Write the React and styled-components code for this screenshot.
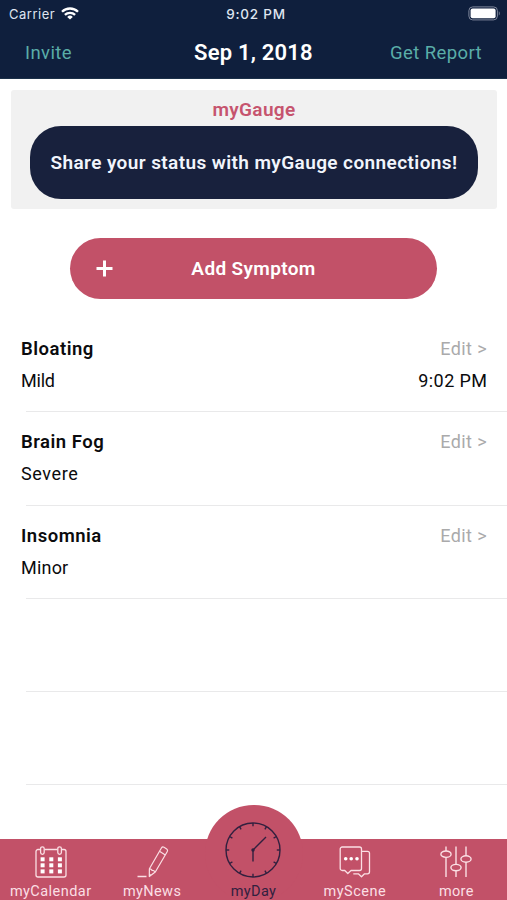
import React from "react"
import styled, { createGlobalStyle } from "styled-components"

const navy = "#0f1f3d"
const pink = "#c25168"
const teal = "#5aada8"

const GlobalStyle = createGlobalStyle`
  * {
    box-sizing: border-box;
  }

  body {
    margin: 0;
    background: #fff;
    font-family: Roboto, "Open Sans", sans-serif;
    color: #0b0b0d;
  }

  button {
    border: 0;
    padding: 0;
    background: none;
    font: inherit;
    color: inherit;
    cursor: pointer;
  }
`

const Screen = styled.div`
  display: flex;
  flex-direction: column;
  width: 507px;
  height: 900px;
  overflow: hidden;
  background: #fff;
`

const Header = styled.header`
  flex: none;
  height: 79px;
  background: ${navy};
  border-bottom: 1px solid #1b3049;
`

const StatusBar = styled.div`
  display: grid;
  grid-template-columns: 1fr auto 1fr;
  align-items: center;
  height: 27px;
  padding: 0 6px 0 9px;
  font-family: Inter, sans-serif;
  font-size: 13px;
  color: #dfe5f0;
`

const Carrier = styled.div`
  display: flex;
  align-items: center;
  gap: 6px;
  letter-spacing: 0.5px;
`

const Clock = styled.div`
  font-size: 13.5px;
  font-weight: 500;
  letter-spacing: 0.75px;
  margin-left: 2px;
`

const Battery = styled.svg`
  justify-self: end;
`

const NavBar = styled.nav`
  display: grid;
  grid-template-columns: 1fr auto 1fr;
  align-items: center;
  height: 52px;
  padding: 0 25px 0 25px;
`

const NavLink = styled.button`
  justify-self: ${p => (p.$end ? "end" : "start")};
  font-size: 18.5px;
  line-height: 22px;
  letter-spacing: 0.4px;
  color: ${teal};
`

const Title = styled.h1`
  margin: 0;
  font-size: 22px;
  line-height: 26px;
  font-weight: 600;
  letter-spacing: 0.2px;
  color: #fff;
`

const Gauge = styled.section`
  flex: none;
  display: flex;
  flex-direction: column;
  align-items: center;
  height: 119px;
  margin: 11px 10px 0 11px;
  padding-top: 9px;
  border-radius: 3px;
  background: #f1f1f1;
`

const GaugeName = styled.h2`
  margin: 0 0 6px;
  font-size: 19px;
  line-height: 21px;
  font-weight: 600;
  letter-spacing: 0.35px;
  color: #c6546e;
`

const ShareButton = styled.button`
  width: 448px;
  height: 73px;
  border-radius: 31px;
  background: #18213d;
  color: #f1f5fc;
  font-size: 19px;
  font-weight: 600;
  letter-spacing: 0.4px;
  white-space: nowrap;
`

const AddButton = styled.button`
  flex: none;
  display: grid;
  grid-template-columns: 68px 1fr 68px;
  align-items: center;
  width: 367px;
  height: 61px;
  margin: 29px 0 0 70px;
  border-radius: 31px;
  background: ${pink};
  color: #fff;
  font-size: 19px;
  font-weight: 600;
  letter-spacing: 0.35px;

  svg {
    justify-self: center;
  }
`

const List = styled.ul`
  flex: none;
  margin: 19px 0 0;
  padding: 0;
  list-style: none;
`

const Row = styled.li`
  display: flex;
  flex-direction: column;
  height: 93.3px;
  padding: 20px 20px 0 21px;
  font-size: 18px;
  line-height: 22px;

  &:after {
    content: "";
    flex: none;
    height: 1px;
    margin: auto -20px 0 5px;
    background: #e9e9ea;
    transform: translateY(1px);
  }
`

const Line = styled.div`
  display: flex;
  justify-content: space-between;
  height: 22px;
  margin-bottom: 10px;
`

const Symptom = styled.span`
  font-size: 18.5px;
  font-weight: 600;
  letter-spacing: 0.5px;
`

const Level = styled.span`
  letter-spacing: ${p => p.$spacing};
`

const Time = styled.span`
  letter-spacing: 0.4px;
  margin-right: -0.4px;
`

const Edit = styled.button`
  color: #aaaaab;
  letter-spacing: 0.4px;
`

const TabBar = styled.footer`
  position: relative;
  flex: none;
  display: grid;
  grid-template-columns: repeat(5, 1fr);
  height: 61px;
  margin-top: auto;
  background: ${pink};

  /* round bump behind the middle tab */
  &:before {
    content: "";
    position: absolute;
    left: 205px;
    top: -34.5px;
    width: 97.5px;
    height: 97.5px;
    border-radius: 50%;
    background: ${pink};
  }
`

const Tab = styled.button`
  position: relative;
  display: flex;
  flex-direction: column;
  align-items: center;
  justify-content: flex-end;
  height: 61px;
  color: ${p => (p.$active ? "#31203f" : "#fbdfe4")};
  font-size: 14.5px;
  line-height: 16px;
  letter-spacing: ${p => p.$spacing};
  white-space: nowrap;

  svg {
    flex: none;
    margin-bottom: 6px;
    overflow: visible;
  }
`

const WifiIcon = () => (
  <svg width="18" height="13" viewBox="0 0 18 13" fill="none" stroke="#fff" strokeWidth="2.3">
    <path d="M1 4.8a11.3 11.3 0 0 1 16 0" />
    <path d="M3.9 7.9a7.2 7.2 0 0 1 10.2 0" />
    <path d="M9 12.6 6.2 9.9a4 4 0 0 1 5.6 0z" fill="#fff" stroke="none" />
  </svg>
)

const BatteryIcon = () => (
  <Battery width="33" height="15" viewBox="0 0 33 15">
    <rect x="0.9" y="0.9" width="28.5" height="13" rx="3.8" fill="none" stroke="#7f879b" />
    <rect x="2.6" y="2.6" width="25" height="9.6" rx="2" fill="#fff" />
    <path d="M30.8 5.3c1.3.6 1.3 3.6 0 4.2z" fill="#7f879b" />
  </Battery>
)

const PlusIcon = () => (
  <svg width="17" height="17" viewBox="0 0 17 17" stroke="#fff" strokeWidth="3">
    <path d="M8.5 0.5v16M0.5 8.5h16" />
  </svg>
)

const CalendarIcon = () => (
  <svg width="32" height="32" viewBox="0 0 32 32" fill="none" stroke="currentColor" strokeWidth="1.3">
    <path d="M5 3.5H3a2 2 0 0 0-2 2V29a2 2 0 0 0 2 2h26a2 2 0 0 0 2-2V5.5a2 2 0 0 0-2-2h-2M9.5 3.5h13" />
    <rect x="5.6" y="0.8" width="3.6" height="7.5" rx="1.8" />
    <rect x="22.8" y="0.8" width="3.6" height="7.5" rx="1.8" />
    {[11.3, 17.3, 23.4].map(y =>
      [5.6, 14.3, 22.9].map(x => (
        <rect key={`${x}-${y}`} x={x} y={y} width="4" height="4" fill="#fff" stroke="none" />
      ))
    )}
  </svg>
)

const PencilIcon = () => (
  <svg width="31" height="32" viewBox="0 0 31 32" fill="none" stroke="currentColor" strokeWidth="1.2" strokeLinejoin="round">
    <path d="M12.4 22.8 24.4 2q1-1.7 2.6-.8l2.7 1.7q1.5 1 .6 2.6L18.3 26l-6 4.5z" />
    <path d="M12.4 22.8q1.8-.2 2.5 1.5 1.9-.2 3.4 1.7M22.5 5.3l5.8 3.6M12.3 28.3l1.6 1" />
    <path d="M0.5 30.5h9" strokeWidth="1.5" />
  </svg>
)

const DialIcon = () => (
  <svg width="56" height="56" viewBox="0 0 56 56" fill="none" stroke="currentColor" strokeWidth="1.4">
    <circle cx="28" cy="28" r="27" />
    {[...Array(12).keys()].map(i => (
      <path key={i} d="M28 1v3.2" transform={`rotate(${i * 30} 28 28)`} />
    ))}
    <path d="M28 28 41 15M28 28v11.5" />
    <circle cx="28" cy="28" r="1.7" fill="currentColor" stroke="none" />
  </svg>
)

const ChatIcon = () => (
  <svg width="32" height="32" viewBox="0 0 32 32" fill="none" stroke="currentColor" strokeWidth="1.3" strokeLinejoin="round">
    <path d="M3.2 1h17.3a2 2 0 0 1 2 2v19.5a2 2 0 0 1-2 2H12l-3.2 3-3-3H3.2a2 2 0 0 1-2-2V3a2 2 0 0 1 2-2z" />
    <path d="M22.5 5.3h6a2 2 0 0 1 2 2v18.5a2 2 0 0 1-2 2h-3l-3 3-3.2-3h-5" />
    <g fill="#fff" stroke="none">
      <circle cx="6.7" cy="12.7" r="1.8" />
      <circle cx="12.2" cy="12.7" r="1.8" />
      <circle cx="18" cy="12.7" r="1.8" />
    </g>
  </svg>
)

const SlidersIcon = () => (
  <svg width="32" height="32" viewBox="0 0 32 32" fill="none" stroke="currentColor" strokeWidth="1.4">
    <path d="M6 0.5v4.5M6 11.4V31M16 0.5v17.8M16 24.8v6.2M26 0.5v9.3M26 16.2v14.8" />
    <ellipse cx="6" cy="8.2" rx="5.1" ry="3.2" />
    <ellipse cx="16" cy="21.6" rx="5.1" ry="3.2" />
    <ellipse cx="26" cy="13" rx="5.1" ry="3.2" />
  </svg>
)

const symptoms = [
  { name: "Bloating", level: "Mild", time: "9:02 PM", spacing: "-0.2px" },
  { name: "Brain Fog", level: "Severe", spacing: "0.6px" },
  { name: "Insomnia", level: "Minor", spacing: "0.2px" },
]

const tabs = [
  { label: "myCalendar", icon: CalendarIcon, spacing: "0.45px" },
  { label: "myNews", icon: PencilIcon, spacing: "0.4px" },
  { label: "myDay", icon: DialIcon, spacing: "0.4px", active: true },
  { label: "myScene", icon: ChatIcon, spacing: "0.5px" },
  { label: "more", icon: SlidersIcon, spacing: "0.3px" },
]

export default function App() {
  return (
    <Screen>
      <GlobalStyle />
      <Header>
        <StatusBar>
          <Carrier>
            Carrier
            <WifiIcon />
          </Carrier>
          <Clock>9:02 PM</Clock>
          <BatteryIcon />
        </StatusBar>
        <NavBar>
          <NavLink>Invite</NavLink>
          <Title>Sep 1, 2018</Title>
          <NavLink $end>Get Report</NavLink>
        </NavBar>
      </Header>

      <Gauge>
        <GaugeName>myGauge</GaugeName>
        <ShareButton>Share your status with myGauge connections!</ShareButton>
      </Gauge>

      <AddButton>
        <PlusIcon />
        Add Symptom
      </AddButton>

      <List>
        {symptoms.map(s => (
          <Row key={s.name}>
            <Line>
              <Symptom>{s.name}</Symptom>
              <Edit>Edit &gt;</Edit>
            </Line>
            <Line>
              <Level $spacing={s.spacing}>{s.level}</Level>
              {s.time && <Time>{s.time}</Time>}
            </Line>
          </Row>
        ))}
        <Row />
        <Row />
      </List>

      <TabBar>
        {tabs.map(({ label, icon: Icon, spacing, active }) => (
          <Tab key={label} $active={active} $spacing={spacing}>
            <Icon />
            {label}
          </Tab>
        ))}
      </TabBar>
    </Screen>
  )
}
